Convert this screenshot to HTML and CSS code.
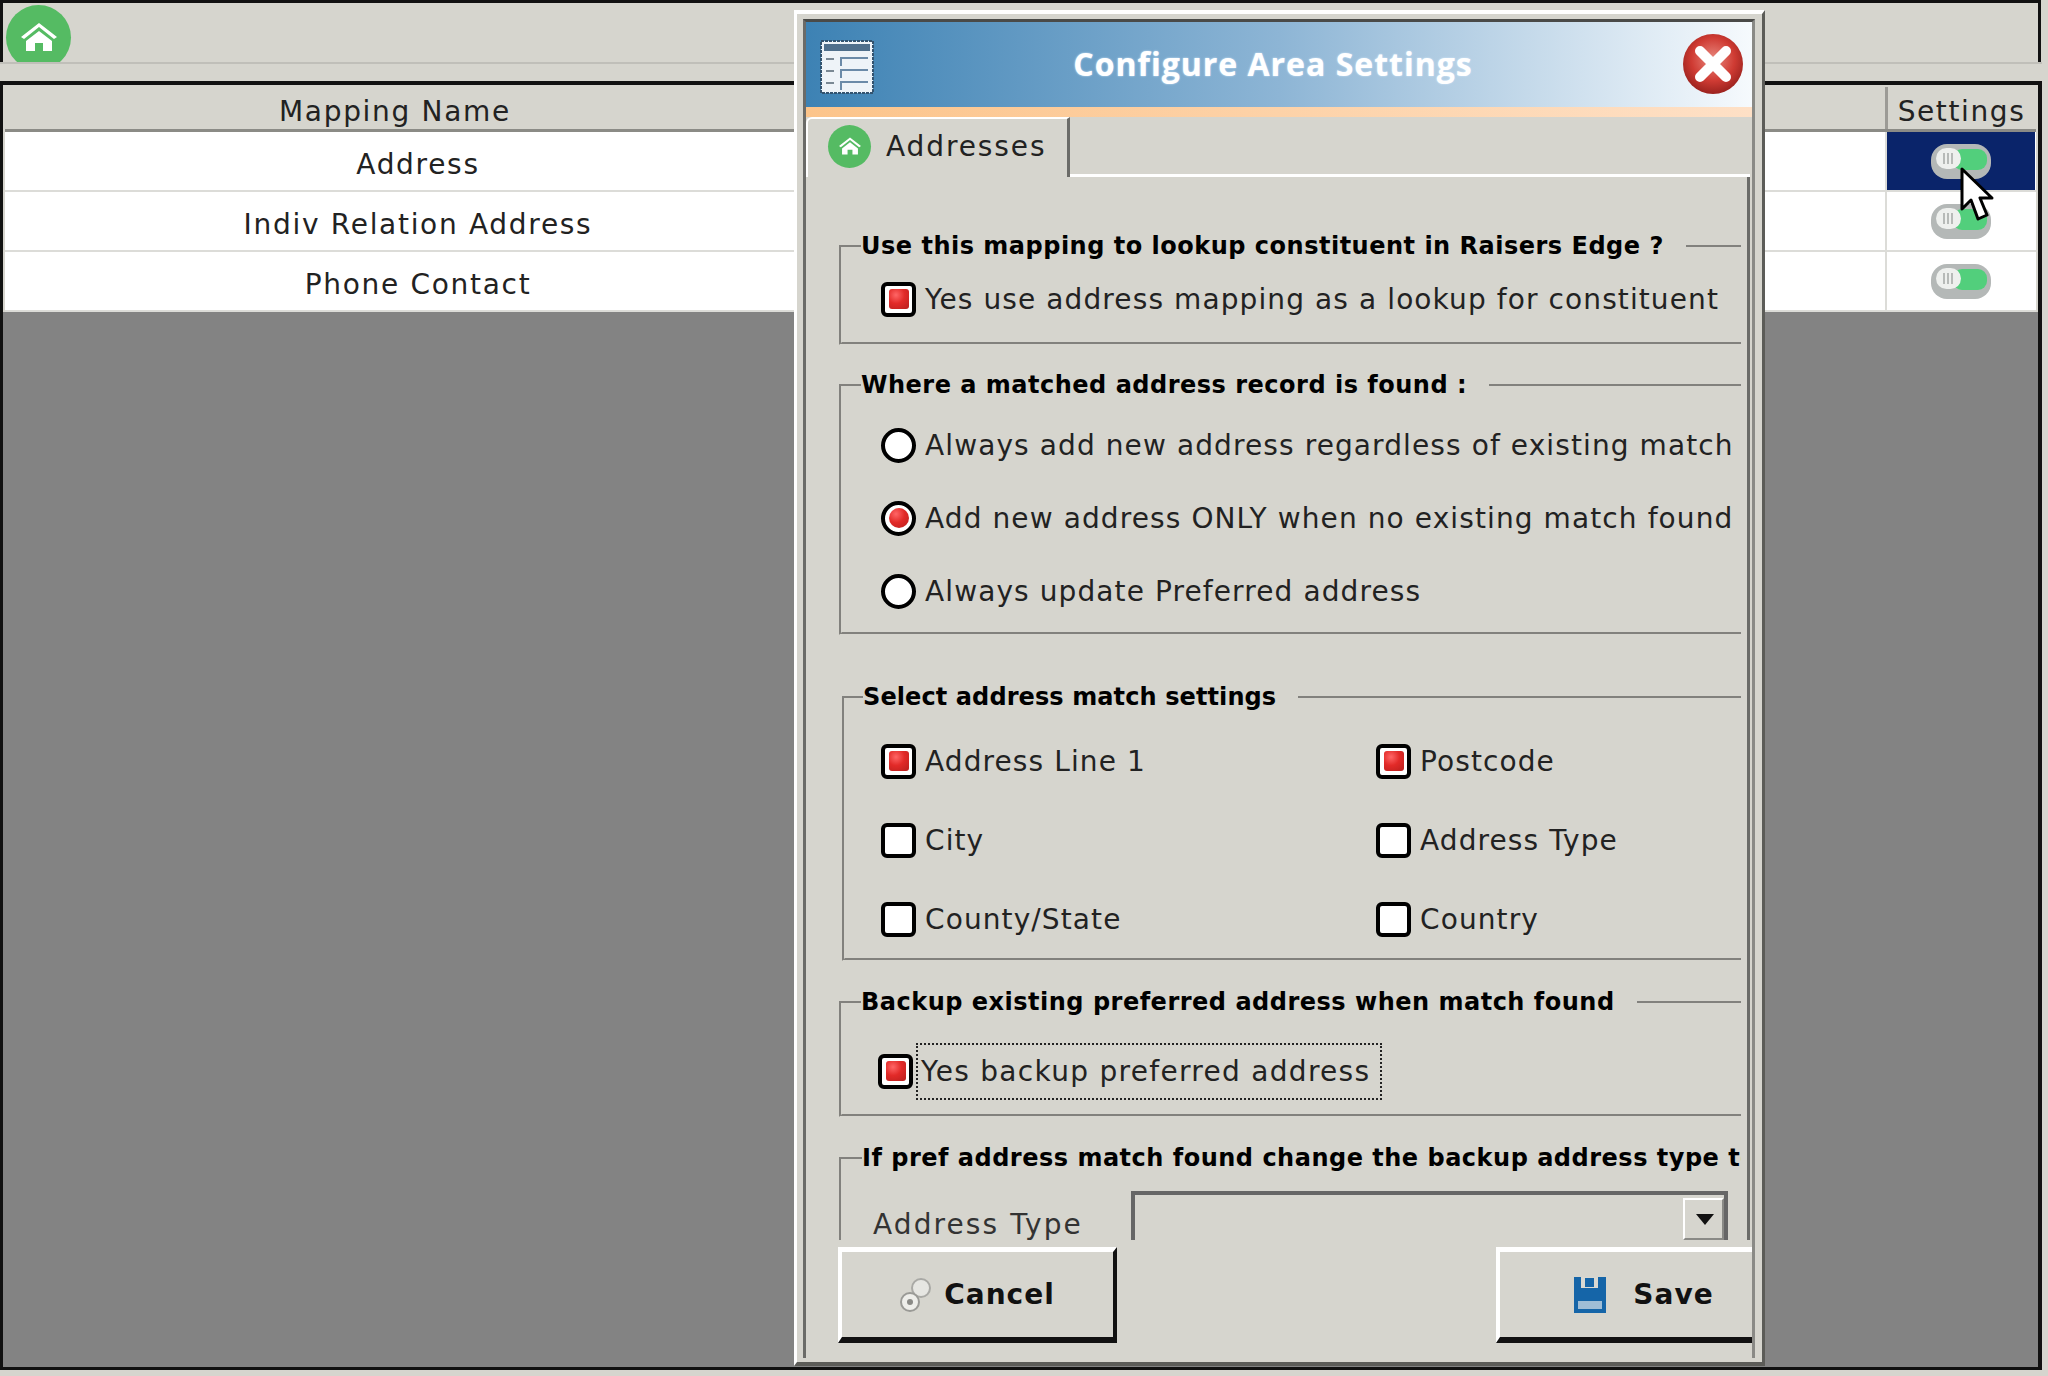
FILE: index.html
```html
<!DOCTYPE html>
<html lang="en">
<head>
<meta charset="utf-8">
<title>Configure Area Settings</title>
<link rel="stylesheet" href="styles.css">
</head>
<body>
<svg class="defs" width="0" height="0" aria-hidden="true">
  <defs>
    <symbol id="house" viewBox="0 0 36 28">
      <path d="M18 0 36 14 33 16 18 4 3 16 0 14Z" fill="#fff"/>
      <path d="M18 8 31 18V28H22V20H14V28H5V18Z" fill="#fff"/>
    </symbol>
    <symbol id="toggle" viewBox="0 0 60 35">
      <rect x="0" y="0" width="60" height="35" rx="16" fill="#b4b8b7"/>
      <rect x="22" y="5" width="34" height="21" rx="9" fill="#52cf7c"/>
      <rect x="5" y="4" width="25" height="21" rx="10.5" fill="#eef0ee"/>
      <path d="M13 9V20M17 9V20M21 9V20" stroke="#a9adab" stroke-width="1.6"/>
    </symbol>
  </defs>
</svg>

<div class="page">
  <header class="toolbar">
    <span class="home-btn"><svg class="home-glyph"><use href="#house"/></svg></span>
  </header>
  <div class="strip"></div>
  <main class="grid-panel">
    <div class="grid-row grid-head">
      <div class="cell cell-name head-name">Mapping Name</div>
      <div class="cell cell-mid"></div>
      <div class="cell cell-set head-set">Settings</div>
    </div>
    <div class="grid-row">
      <div class="cell cell-name">Address</div>
      <div class="cell cell-mid"></div>
      <div class="cell cell-set is-selected"><svg class="toggle"><use href="#toggle"/></svg></div>
    </div>
    <div class="grid-row">
      <div class="cell cell-name">Indiv Relation Address</div>
      <div class="cell cell-mid"></div>
      <div class="cell cell-set"><svg class="toggle"><use href="#toggle"/></svg></div>
    </div>
    <div class="grid-row">
      <div class="cell cell-name">Phone Contact</div>
      <div class="cell cell-mid"></div>
      <div class="cell cell-set"><svg class="toggle"><use href="#toggle"/></svg></div>
    </div>
    <div class="grid-empty"></div>
  </main>
  <div class="foot"></div>
</div>

<svg class="cursor" viewBox="0 0 34 56" aria-hidden="true">
  <path d="M2 2V42L11 33 18 52 27 48 20 31H32Z" fill="#fff" stroke="#000" stroke-width="3" stroke-linejoin="round"/>
</svg>

<section class="modal">
  <div class="modal-inner">
    <div class="titlebar">
      <svg class="form-icon" viewBox="0 0 54 54" aria-hidden="true">
        <rect x="1" y="1" width="52" height="52" fill="#eef3f8" stroke="#33536f" stroke-width="2" stroke-dasharray="3 1"/>
        <rect x="4" y="4" width="46" height="7" fill="#4f6f8c"/>
        <path d="M6 19H14M6 31H14M6 43H14" stroke="#7a8894" stroke-width="2"/>
        <path d="M21 26V18H48M21 38V30H48M21 50V42H48" fill="none" stroke="#6b8aa8" stroke-width="2"/>
      </svg>
      <h1 class="title">Configure Area Settings</h1>
      <svg class="close" viewBox="0 0 60 60" aria-hidden="true">
        <defs>
          <radialGradient id="red" cx="50%" cy="42%" r="60%">
            <stop offset="0" stop-color="#e98a80"/>
            <stop offset=".6" stop-color="#cf3b33"/>
            <stop offset="1" stop-color="#96201c"/>
          </radialGradient>
        </defs>
        <circle cx="30" cy="30" r="30" fill="url(#red)"/>
        <path d="M17 17 43 43M43 17 17 43" stroke="#fff" stroke-width="10" stroke-linecap="round"/>
      </svg>
    </div>
    <div class="orange"></div>
    <div class="tabs">
      <div class="tab">
        <span class="tab-icon"><svg class="tab-glyph"><use href="#house"/></svg></span>
        <span>Addresses</span>
      </div>
      <div class="tab-rest"></div>
    </div>
    <div class="panel">
      <div class="panel-clip">
        <fieldset class="group g1">
          <legend>Use this mapping to lookup constituent in Raisers Edge ?</legend>
          <div class="opt"><span class="box on"></span><span>Yes use address mapping as a lookup for constituent</span></div>
        </fieldset>
        <fieldset class="group g2">
          <legend>Where a matched address record is found :</legend>
          <div class="opt"><span class="radio"></span><span>Always add new address regardless of existing match</span></div>
          <div class="opt"><span class="radio on"></span><span>Add new address ONLY when no existing match found</span></div>
          <div class="opt"><span class="radio"></span><span>Always update Preferred address</span></div>
        </fieldset>
        <fieldset class="group g3">
          <legend>Select address match settings</legend>
          <div class="match">
            <div class="opt"><span class="box on"></span><span>Address Line 1</span></div>
            <div class="opt"><span class="box on"></span><span>Postcode</span></div>
            <div class="opt"><span class="box"></span><span>City</span></div>
            <div class="opt"><span class="box"></span><span>Address Type</span></div>
            <div class="opt"><span class="box"></span><span>County/State</span></div>
            <div class="opt"><span class="box"></span><span>Country</span></div>
          </div>
        </fieldset>
        <fieldset class="group g4">
          <legend>Backup existing preferred address when match found</legend>
          <div class="opt opt-tight"><span class="box on"></span><span class="focus">Yes backup preferred address</span></div>
        </fieldset>
        <fieldset class="group g5">
          <legend>If pref address match found change the backup address type to</legend>
          <div class="type-row">
            <span class="type-label">Address Type</span>
            <div class="select"><span class="select-btn"></span></div>
          </div>
        </fieldset>
      </div>
    </div>
    <div class="actions">
      <button class="btn btn-cancel" type="button">
        <svg class="btn-icon" viewBox="0 0 32 36" aria-hidden="true">
          <circle cx="21" cy="11" r="9" fill="#e6e6e2" stroke="#a9a9a5" stroke-width="2"/>
          <circle cx="10" cy="25" r="9" fill="#eeeeea" stroke="#9a9a96" stroke-width="2"/>
          <circle cx="10" cy="25" r="3" fill="#8a8a86"/>
        </svg>
        <span>Cancel</span>
      </button>
      <button class="btn btn-save" type="button">
        <svg class="btn-icon" viewBox="0 0 32 36" aria-hidden="true">
          <path d="M0 0H32V36H0Z" fill="#1565a8"/>
          <path d="M7 0H24V11H7Z" fill="#d9d8d2"/>
          <rect x="11" y="1" width="9" height="9" fill="#1565a8"/>
          <rect x="4" y="24" width="24" height="8" fill="#9fbdd6"/>
        </svg>
        <span>Save</span>
      </button>
    </div>
  </div>
</section>
</body>
</html>
```

FILE: styles.css
```css
* { box-sizing: border-box; }
html, body { margin: 0; height: 100%; }
body {
  background: #d6d5ce;
  font-family: "DejaVu Sans", Verdana, sans-serif;
  color: #222;
  overflow: hidden;
}
.defs { display: block; height: 0; }

.page { display: flex; flex-direction: column; width: 2048px; height: 1376px; }

.toolbar {
  height: 62px;
  margin-right: 7px;
  border-top: 3px solid #111;
  border-left: 3px solid #111;
  border-right: 3px solid #111;
  padding: 2px 0 0 3px;
  overflow: hidden;
}
.home-btn {
  display: flex; align-items: center; justify-content: center;
  width: 65px; height: 65px; border-radius: 50%;
  background: #55bb63;
}
.home-glyph { width: 36px; height: 28px; margin-bottom: 1px; }

.strip { height: 19px; margin-right: 6px; border-top: 2px solid #c0bfb9; }

.grid-panel {
  flex: 1;
  display: flex; flex-direction: column;
  margin-right: 6px;
  border: 4px solid #111;
  border-left-width: 3px;
  border-bottom-width: 3px;
  padding: 2px 2px 0 2px;
  background: #d6d5ce;
}
.grid-row { display: grid; grid-template-columns: 826px 1054px 150px; background: #fff; height: 60px; border-bottom: 2px solid #dcdcd8; }
.grid-head { height: 45px; background: #d6d5ce; border-bottom: 3px solid #8b8b86; }
.cell { display: flex; align-items: center; justify-content: center; padding-top: 7px; font-size: 28px; letter-spacing: 1.7px; white-space: nowrap; }
.head-name { padding-right: 46px; }
.cell-set { border-left: 2px solid #dcdcd8; height: 58px; padding-top: 0; }
.grid-head .cell-set { height: 42px; padding-top: 6px; border-left: 3px solid #9c9b96; letter-spacing: 1.6px; }
.is-selected { background: #0a246a; }
.toggle { width: 60px; height: 35px; }
.grid-empty { flex: 1; background: #838383; margin: 0 -2px; }
.foot { height: 6px; }

.cursor { position: absolute; left: 1960px; top: 167px; width: 34px; height: 56px; z-index: 1; }

.modal {
  position: absolute; left: 794px; top: 10px; width: 971px; height: 1356px;
  background: #d6d5ce;
  border-style: solid; border-width: 4px 3px 4px 3px;
  border-color: #fff #5c5c58 #5c5c58 #fff;
  padding: 5px 7px 4px 6px;
  z-index: 2;
}
.modal-inner {
  height: 100%;
  display: flex; flex-direction: column;
  border-top: 3px solid #4a4a48;
  border-left: 3px solid #6b6b68;
  border-right: 3px solid #8a8a86;
}
.titlebar {
  position: relative;
  height: 85px; flex: none;
  display: flex; align-items: center; justify-content: center;
  background: linear-gradient(90deg, #3d82b4 0%, #8db5d5 50%, #f6fafd 100%);
}
.form-icon { position: absolute; left: 14px; top: 18px; width: 54px; height: 54px; }
.title {
  margin: 0 2px 3px -10px;
  font-family: "Open Sans", sans-serif; font-weight: 700; font-size: 32px;
  letter-spacing: 1px;
  color: #fff;
  text-shadow: 0 0 2px #d8ecff;
}
.close { position: absolute; right: 9px; top: 12px; width: 60px; height: 60px; }
.orange { height: 10px; flex: none; background: linear-gradient(90deg, #fcc48a, #fee0c6); }

.tabs { display: flex; height: 60px; flex: none; }
.tab {
  display: flex; align-items: center; gap: 15px;
  width: 264px; padding: 0 0 4px 20px;
  border-top: 2px solid #fff;
  border-left: 2px solid #fff;
  border-right: 3px solid #6b6b68;
  border-top-left-radius: 6px;
  font-size: 28px; letter-spacing: 1.9px;
}
.tab-icon {
  display: flex; align-items: center; justify-content: center;
  flex: none;
  width: 43px; height: 43px; border-radius: 50%;
  background: #55bb63;
}
.tab-glyph { width: 22px; height: 18px; }
.tab-rest { flex: 1; border-bottom: 3px solid #fff; margin-right: 2px; }

.panel {
  flex: 1; min-height: 0;
  display: flex;
  margin-right: 2px;
  border-right: 3px solid #6b6b68;
  padding: 0 6px 0 33px;
}
.panel-clip { flex: 1; min-width: 0; overflow: hidden; }
.group {
  margin: 0;
  width: 1000px;
  min-width: 0;
  border: 3px groove #d6d5ce;
  padding: 0;
}
.group legend {
  margin-left: 19px;
  padding: 0 22px 0 0;
  font-size: 24px; font-weight: 700; line-height: 30px; color: #000;
  letter-spacing: 0.5px;
  white-space: nowrap;
}
.g1 { margin-top: 54px; height: 114px; padding-top: 20px; }
.g1 > .opt, .g2 > .opt { margin-left: 39px; }
.g2 { margin-top: 25px; height: 265px; padding-top: 27px; display: flex; flex-direction: column; gap: 37px; }
.g3 { margin-top: 47px; margin-left: 3px; height: 279px; padding-top: 31px; }
.g3 legend { letter-spacing: 0.1px; margin-left: 18px; }
.g4 { margin-top: 26px; height: 130px; padding-top: 36px; }
.g4 > .opt { margin-left: 36px; }
.g5 { margin-top: 26px; height: 200px; }
.g5 legend { margin-left: 20px; }

.opt { display: flex; align-items: center; gap: 9px; height: 36px; font-size: 28px; letter-spacing: 1.1px; white-space: nowrap; }
.opt-tight { gap: 5px; letter-spacing: 1.3px; }
.box, .radio {
  flex: none; position: relative;
  width: 35px; height: 35px;
  background: #fff;
  border: 4px solid #000;
}
.box { border-radius: 6px; }
.radio { border-radius: 50%; }
.box.on::after, .radio.on::after {
  content: "";
  position: absolute; left: 50%; top: 50%;
  width: 20px; height: 20px; margin: -10px 0 0 -10px;
  background: radial-gradient(circle at 35% 30%, #f66 0, #e22a28 45%, #b81f1d 100%);
  border-radius: 3px;
}
.radio.on::after { border-radius: 50%; }
.focus { padding: 10px 10px 10px 3px; outline: 2px dotted #222; }

.match { display: grid; grid-template-columns: 495px 1fr; row-gap: 43px; margin-left: 36px; }

.type-row { display: flex; align-items: flex-start; gap: 46px; padding: 18px 0 0 31px; }
.type-label { font-size: 28px; letter-spacing: 2.1px; padding-top: 17px; color: #333; white-space: nowrap; width: 212px; }
.select {
  display: flex; justify-content: flex-end;
  width: 597px; height: 80px;
  border-top: 4px solid #666; border-left: 4px solid #666; border-right: 4px solid #666;
  padding: 3px 0 0;
}
.select-btn {
  position: relative;
  width: 41px; height: 42px;
  border: 2px solid; border-color: #fff #8a8a86 #8a8a86 #fff;
}
.select-btn::after {
  content: ""; position: absolute; left: 11px; top: 14px;
  border: 9px solid transparent; border-top: 11px solid #111; border-bottom: 0;
}

.actions { flex: none; height: 118px; display: flex; justify-content: space-between; padding: 7px 0 25px 32px; }
.btn {
  display: flex; align-items: center; justify-content: center;
  height: 96px;
  background: #d6d5ce;
  border-style: solid; border-width: 5px 4px 6px 4px;
  border-color: #fff #111 #111 #fff;
  font-family: "DejaVu Sans", sans-serif; font-size: 28px; font-weight: 700; letter-spacing: 1px; color: #111;
}
.btn-cancel { width: 279px; gap: 12px; }
.btn-save { width: 256px; gap: 27px; padding-left: 42px; border-right: 0; }
.btn-icon { width: 32px; height: 36px; }
```
